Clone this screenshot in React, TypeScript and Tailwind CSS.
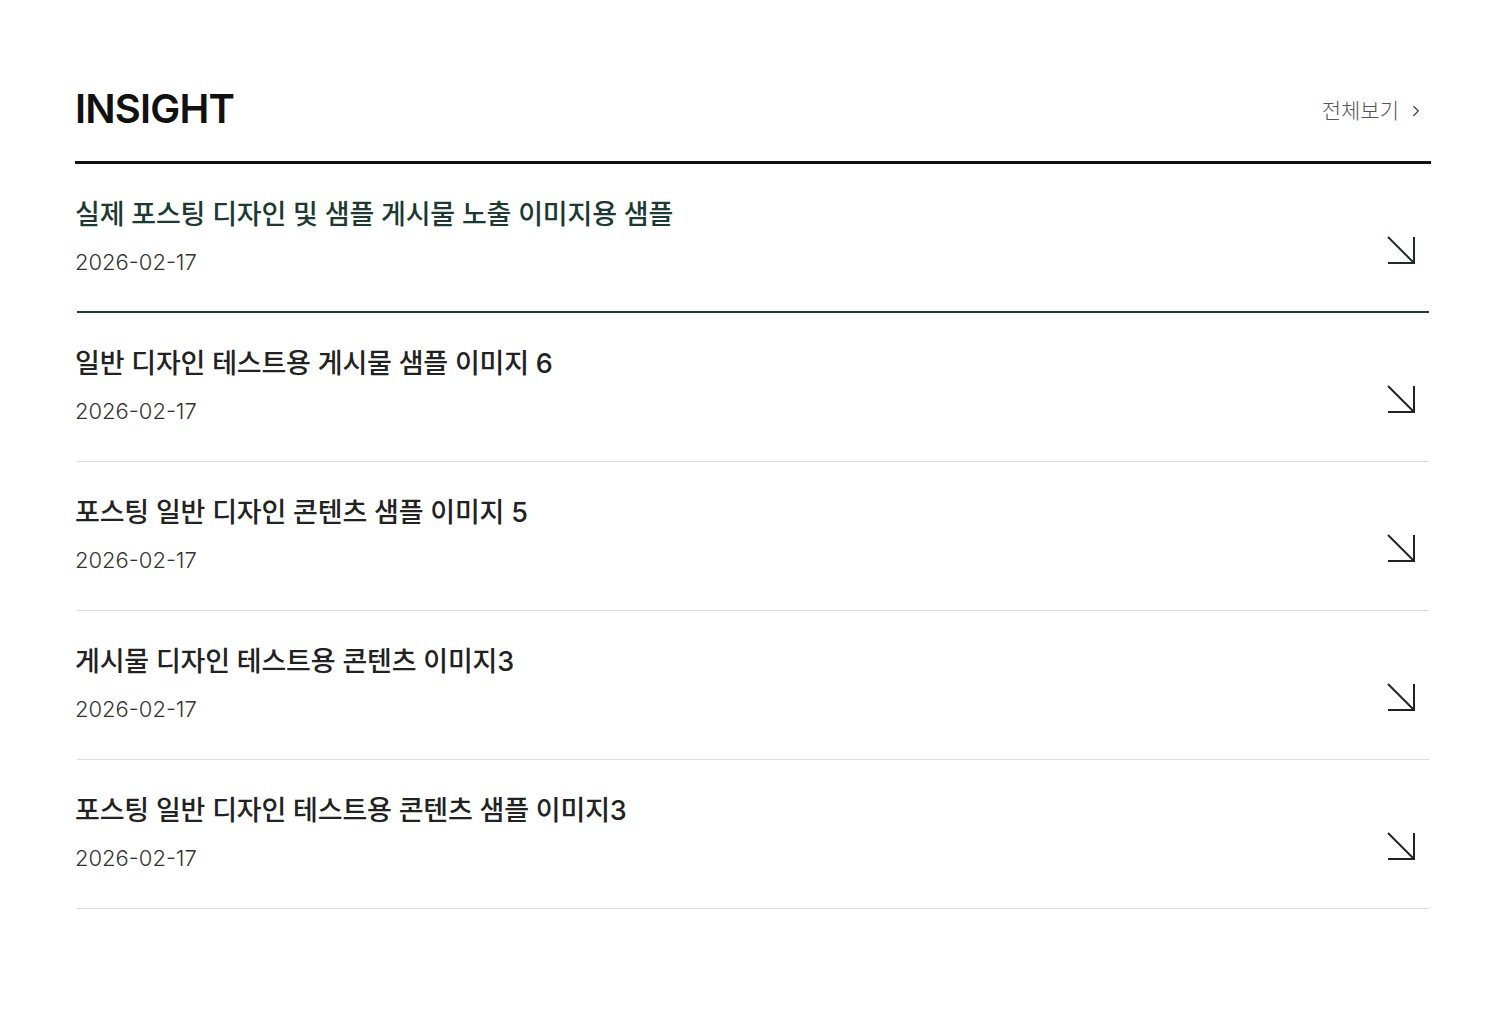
import { ChevronRight } from "lucide-react";

type Post = { title: string; date: string };

const posts: Post[] = [
  { title: "실제 포스팅 디자인 및 샘플 게시물 노출 이미지용 샘플", date: "2026-02-17" },
  { title: "일반 디자인 테스트용 게시물 샘플 이미지 6", date: "2026-02-17" },
  { title: "포스팅 일반 디자인 콘텐츠 샘플 이미지 5", date: "2026-02-17" },
  { title: "게시물 디자인 테스트용 콘텐츠 이미지3", date: "2026-02-17" },
  { title: "포스팅 일반 디자인 테스트용 콘텐츠 샘플 이미지3", date: "2026-02-17" },
];

function CornerArrow() {
  return (
    <svg width="30" height="30" viewBox="0 0 30 30" fill="none" stroke="currentColor" strokeWidth="2">
      <path d="M2 2 L28 28" />
      <path d="M28 2 V28 H2" />
    </svg>
  );
}

export default function App() {
  return (
    <div
      className="min-h-screen bg-white"
      style={{ fontFamily: "Inter, 'Noto Sans CJK KR', sans-serif" }}
    >
      <section className="ml-[75px] w-[1356px] pt-[86px]">
        {/* Header */}
        <div className="flex items-center justify-between pb-[29px]">
          <h2 className="text-[40px] font-semibold leading-[46px] tracking-[-0.8px] text-[#111]">INSIGHT</h2>
          <a className="mt-[4px] flex items-center gap-[8px] pr-[6px] text-[21px] font-light text-[#555]">
            전체보기
            <ChevronRight size={18} strokeWidth={1.75} className="text-[#444]" />
          </a>
        </div>
        <div className="h-[3px] bg-[#111]" />

        {/* List */}
        <ul>
          {posts.map((post, i) => (
            <li
              key={i}
              className={`mx-[2px] flex items-end justify-between ${
                i === 0 ? "border-b-2 border-[#1d3b33]" : "border-b border-[#dcdcdc]"
              }`}
            >
              <div className={`-ml-[2px] pt-[34px] ${i === 0 ? "pb-[36px]" : "pb-[37px]"}`}>
                <p
                  className={`text-[27px] font-medium leading-[34px] tracking-[-0.2px] ${
                    i === 0 ? "text-[#1b3a31]" : "text-[#222]"
                  }`}
                >
                  {post.title}
                </p>
                <p className="mt-[17px] text-[22px] font-light leading-[26px] text-[#333]">{post.date}</p>
              </div>
              <div className={`mr-[13px] ${i === 0 ? "mb-[46px] text-[#1d2e2a]" : "mb-[47px] text-[#222]"}`}>
                <CornerArrow />
              </div>
            </li>
          ))}
        </ul>
      </section>
    </div>
  );
}
